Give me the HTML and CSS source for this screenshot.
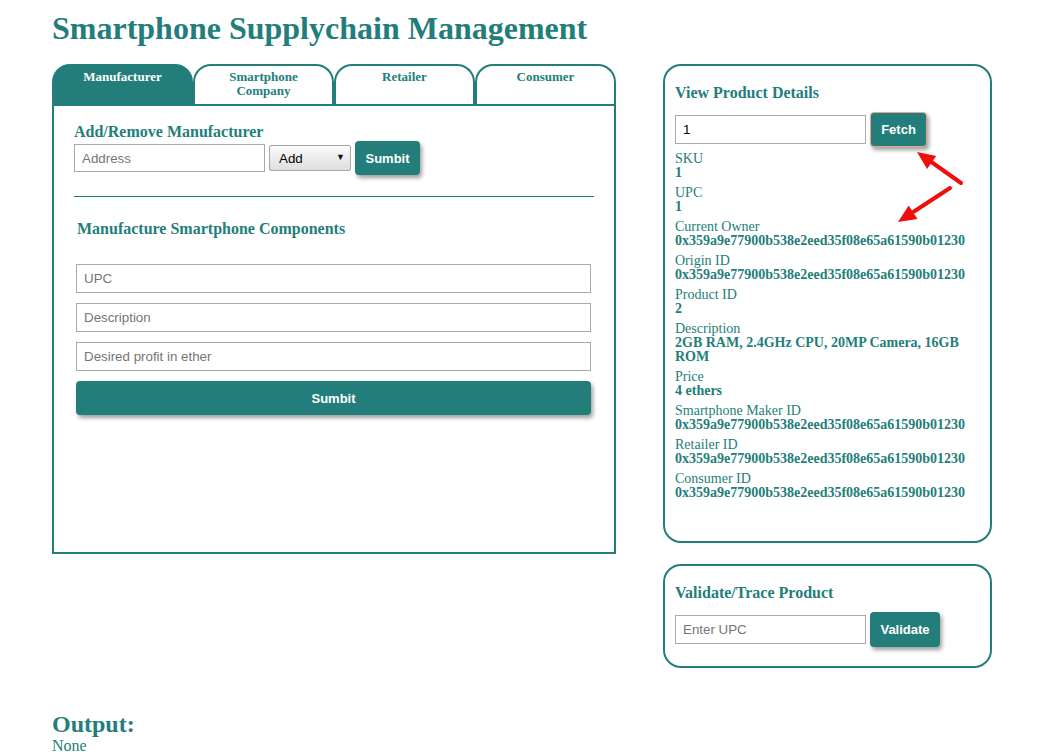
FILE: index.html
```html
<!DOCTYPE html>
<html lang="en">
<head>
<meta charset="utf-8">
<title>Smartphone Supplychain Management</title>
<link rel="stylesheet" href="styles.css">
</head>
<body>
<div class="page">
  <h1 class="title">Smartphone Supplychain Management</h1>
  <div class="columns">
    <div class="left">
      <div class="tabs">
        <div class="tab active">Manufacturer</div>
        <div class="tab">Smartphone<br>Company</div>
        <div class="tab">Retailer</div>
        <div class="tab">Consumer</div>
      </div>
      <div class="tab-body">
        <h3 class="section-title">Add/Remove Manufacturer</h3>
        <div class="inline-row">
          <input class="field field-address" type="text" placeholder="Address">
          <div class="select-wrap">
            <select class="select"><option>Add</option><option>Remove</option></select>
          </div>
          <button class="btn btn-submit">Sumbit</button>
        </div>
        <hr class="divider">
        <div class="components">
          <h3 class="section-title sub">Manufacture Smartphone Components</h3>
          <input class="field field-full" type="text" placeholder="UPC">
          <input class="field field-full" type="text" placeholder="Description">
          <input class="field field-full" type="text" placeholder="Desired profit in ether">
          <button class="btn btn-wide">Sumbit</button>
        </div>
      </div>
    </div>
    <div class="right">
      <div class="panel panel-details">
        <svg class="arrows" width="329" height="200" viewBox="0 0 329 200">
          <line x1="298" y1="119" x2="267" y2="97" stroke="#f20d0d" stroke-width="4" stroke-linecap="round"/>
          <polygon points="254,88 273.3,91.9 264.1,104.9" fill="#f20d0d"/>
          <line x1="287" y1="124" x2="251" y2="147.5" stroke="#f20d0d" stroke-width="4" stroke-linecap="round"/>
          <polygon points="235,158 254.5,154.9 245.7,141.5" fill="#f20d0d"/>
        </svg>
        <h3 class="section-title">View Product Details</h3>
        <div class="inline-row">
          <input class="field field-short" type="text" value="1">
          <button class="btn btn-fetch">Fetch</button>
        </div>
        <div class="details">
          <div class="detail"><div class="label">SKU</div><div class="value">1</div></div>
          <div class="detail"><div class="label">UPC</div><div class="value">1</div></div>
          <div class="detail"><div class="label">Current Owner</div><div class="value">0x359a9e77900b538e2eed35f08e65a61590b01230</div></div>
          <div class="detail"><div class="label">Origin ID</div><div class="value">0x359a9e77900b538e2eed35f08e65a61590b01230</div></div>
          <div class="detail"><div class="label">Product ID</div><div class="value">2</div></div>
          <div class="detail"><div class="label">Description</div><div class="value">2GB RAM, 2.4GHz CPU, 20MP Camera, 16GB ROM</div></div>
          <div class="detail"><div class="label">Price</div><div class="value">4 ethers</div></div>
          <div class="detail"><div class="label">Smartphone Maker ID</div><div class="value">0x359a9e77900b538e2eed35f08e65a61590b01230</div></div>
          <div class="detail"><div class="label">Retailer ID</div><div class="value">0x359a9e77900b538e2eed35f08e65a61590b01230</div></div>
          <div class="detail"><div class="label">Consumer ID</div><div class="value">0x359a9e77900b538e2eed35f08e65a61590b01230</div></div>
        </div>
      </div>
      <div class="panel panel-validate">
        <h3 class="section-title">Validate/Trace Product</h3>
        <div class="inline-row">
          <input class="field field-short" type="text" placeholder="Enter UPC">
          <button class="btn btn-validate">Validate</button>
        </div>
      </div>
    </div>
  </div>
  <div class="output">
    <h2 class="output-title">Output:</h2>
    <div class="output-text">None</div>
  </div>
</div>
</body>
</html>
```
FILE: styles.css
```css
* { box-sizing: border-box; }

body {
  margin: 0;
  background: #ffffff;
  color: #237e7b;
  font-family: "Liberation Serif", "Times New Roman", serif;
}

.page {
  width: 940px;
  margin: 0 auto;
  padding-top: 10px;
}

.title {
  margin: 0 0 18px 0;
  font-size: 32px;
  line-height: 36px;
  font-weight: bold;
  color: #237e7b;
}

.columns {
  display: flex;
  gap: 47px;
  align-items: flex-start;
}

.left {
  width: 564px;
}

.tabs {
  display: flex;
}

.tab {
  flex: 1 1 0;
  height: 40px;
  border: 2px solid #237e7b;
  border-bottom: none;
  border-radius: 18px 18px 0 0;
  text-align: center;
  font-size: 13px;
  line-height: 14px;
  font-weight: bold;
  padding-top: 4px;
  color: #237e7b;
  background: #ffffff;
}

.tab.active {
  background: #237e7b;
  color: #ffffff;
}

.tab-body {
  height: 450px;
  border: 2px solid #237e7b;
  padding: 17px 20px 0 20px;
}

.section-title {
  margin: 0;
  font-size: 16px;
  line-height: 18px;
  font-weight: bold;
  color: #237e7b;
}

.inline-row {
  display: flex;
  align-items: center;
  gap: 4px;
  margin-top: 0;
}

.field {
  border: 1px solid #a9a9a9;
  border-radius: 0;
  padding: 0 7px;
  font-family: "Liberation Sans", Arial, sans-serif;
  font-size: 13.33px;
  color: #000000;
  background: #ffffff;
  outline: none;
}

.field::placeholder {
  color: #757575;
}

.field-address {
  width: 191px;
  height: 28px;
}

.select-wrap {
  position: relative;
  width: 82px;
  height: 26px;
}

.select {
  appearance: none;
  -webkit-appearance: none;
  width: 82px;
  height: 26px;
  border: 1px solid #a6a6a6;
  border-radius: 2px;
  background: linear-gradient(#fbfbfb, #dedede);
  font-family: "Liberation Sans", Arial, sans-serif;
  font-size: 13.33px;
  color: #000000;
  padding: 0 0 0 9px;
  margin: 0;
}

.select-wrap::after {
  content: "\25BC";
  position: absolute;
  right: 6px;
  top: 7px;
  font-size: 9px;
  line-height: 10px;
  color: #111111;
  pointer-events: none;
}

.btn {
  border: none;
  border-radius: 4px;
  background: #237e7b;
  color: #ffffff;
  font-family: "Liberation Sans", Arial, sans-serif;
  font-size: 13px;
  font-weight: bold;
  box-shadow: 2px 3px 4px rgba(0, 0, 0, 0.38);
  padding: 0;
  cursor: pointer;
}

.btn-submit {
  width: 65px;
  height: 34px;
}

.divider {
  border: none;
  border-top: 1px solid #237e7b;
  height: 0;
  margin: 21px 0 23px 0;
}

.components {
  display: flex;
  flex-direction: column;
  gap: 10px;
  padding: 0 3px 0 2px;
}

.components .sub {
  margin: 0 0 16px 1px;
}

.field-full {
  width: 100%;
  height: 29px;
  padding: 0 7px;
}

.btn-wide {
  width: 100%;
  height: 34px;
}

.right {
  width: 329px;
  display: flex;
  flex-direction: column;
  gap: 21px;
}

.panel {
  position: relative;
  border: 2px solid #237e7b;
  border-radius: 18px;
  padding: 18px 10px 18px 10px;
}

.panel-details {
  height: 479px;
}

.panel-validate {
  padding-bottom: 19px;
}

.panel .inline-row {
  margin-top: 10px;
}

.field-short {
  width: 191px;
  height: 29px;
}

.btn-fetch {
  width: 57px;
  height: 35px;
  border: 1px solid #e9a48b;
}

.btn-validate {
  width: 70px;
  height: 35px;
}

.arrows {
  position: absolute;
  left: -2px;
  top: -2px;
  overflow: visible;
  pointer-events: none;
}

.details {
  margin-top: 5px;
  font-size: 14px;
  line-height: 14px;
}

.detail {
  margin-bottom: 6px;
}

.label {
  font-weight: normal;
}

.value {
  font-weight: bold;
}

.output {
  margin-top: 43px;
}

.output-title {
  margin: 0;
  font-size: 24px;
  line-height: 26px;
  font-weight: bold;
  color: #237e7b;
}

.output-text {
  font-size: 16px;
  line-height: 18px;
}
```
